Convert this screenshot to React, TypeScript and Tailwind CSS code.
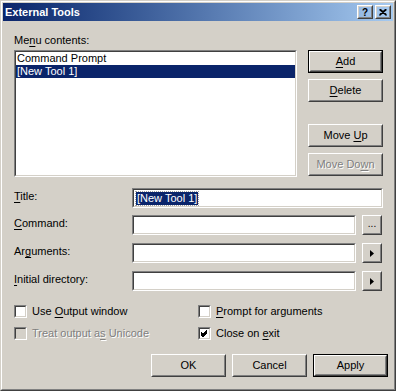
import React from "react";

const U = ({ children }: { children: React.ReactNode }) => (
  <span className="underline underline-offset-[2px] decoration-1">{children}</span>
);

function Raised({
  w,
  h,
  def,
  disabled,
  children,
}: {
  w: number;
  h: number;
  def?: boolean;
  disabled?: boolean;
  children: React.ReactNode;
}) {
  const inner = (
    <div className="w-full h-full border border-t-white border-l-white border-r-[#404040] border-b-[#404040]">
      <div
        className={
          "w-full h-full flex items-center justify-center border border-t-[#d4d0c8] border-l-[#d4d0c8] border-r-[#808080] border-b-[#808080] " +
          (disabled ? "text-[#808080] [text-shadow:1px_1px_0_#ffffff]" : "text-black")
        }
      >
        <span className="flex items-center whitespace-pre">{children}</span>
      </div>
    </div>
  );
  return (
    <div
      style={{ width: w, height: h }}
      className={def ? "border border-black box-border" : "box-border"}
    >
      {inner}
    </div>
  );
}

function Sunken({ w, h, bg = "bg-white", children }: { w: number; h: number; bg?: string; children?: React.ReactNode }) {
  return (
    <div
      style={{ width: w, height: h }}
      className="box-border border border-t-[#808080] border-l-[#808080] border-r-white border-b-white"
    >
      <div className={"w-full h-full border border-t-[#404040] border-l-[#404040] border-r-[#d4d0c8] border-b-[#d4d0c8] " + bg}>
        {children}
      </div>
    </div>
  );
}

function Check({ checked, disabled, children }: { checked?: boolean; disabled?: boolean; children: React.ReactNode }) {
  return (
    <div className="flex items-center h-[13px] gap-[5px]">
      <Sunken w={13} h={13} bg={disabled ? "bg-[#d4d0c8]" : "bg-white"}>
        {checked && (
          <svg width="9" height="9" viewBox="0 0 9 9" className="block">
            <path d="M1 3.5 L3 5.5 L7 1.5 M1 4.5 L3 6.5 L7 2.5 M1 5.5 L3 7.5 L7 3.5" stroke="#000" strokeWidth="1" fill="none" shapeRendering="crispEdges" />
          </svg>
        )}
      </Sunken>
      <span className={disabled ? "text-[#808080] [text-shadow:1px_1px_0_#ffffff]" : "text-black"}>{children}</span>
    </div>
  );
}

function Arrow() {
  return (
    <svg width="4" height="7" viewBox="0 0 4 7" className="block">
      <path d="M0 0 L4 3.5 L0 7 Z" fill="#000" />
    </svg>
  );
}

function FieldRow({ label, mt, button, children }: { label: React.ReactNode; mt: number; button?: React.ReactNode; children?: React.ReactNode }) {
  return (
    <div className="flex items-center h-[20px]" style={{ marginTop: mt }}>
      <div className="w-[118px] -mt-[3px]">{label}</div>
      {button ? (
        <>
          <Sunken w={224} h={20} />
          <div className="ml-[6px]">
            <Raised w={20} h={20}>{button}</Raised>
          </div>
        </>
      ) : (
        <Sunken w={251} h={20}>
          {children}
        </Sunken>
      )}
    </div>
  );
}

export default function App() {
  return (
    <div
      className="w-[396px] h-[391px] box-border border border-t-[#d4d0c8] border-l-[#d4d0c8] border-r-[#404040] border-b-[#404040] bg-[#d4d0c8] text-[11px] leading-[13px] text-black"
      style={{ fontFamily: '"Liberation Sans", Arial, sans-serif' }}
    >
      <div className="w-full h-full box-border border border-t-white border-l-white border-r-[#808080] border-b-[#808080] p-[1px]">
        {/* title bar */}
        <div className="h-[18px] flex items-center justify-between bg-linear-to-r from-[#0a246a] to-[#a6caf0] pl-[2px] pr-[2px]">
          <span className="text-white font-bold text-[11px]">External Tools</span>
          <div className="flex gap-[2px]">
            <Raised w={16} h={14}>
              <span className="font-bold text-[10px] leading-[10px] mt-[1px]">?</span>
            </Raised>
            <Raised w={16} h={14}>
              <svg width="8" height="7" viewBox="0 0 8 7" className="block">
                <path d="M0.5 0.5 L7.5 6.5 M1.5 0.5 L7.5 5.7 M7.5 0.5 L0.5 6.5 M6.5 0.5 L0.5 5.7" stroke="#000" strokeWidth="1.2" fill="none" />
              </svg>
            </Raised>
          </div>
        </div>

        {/* body */}
        <div className="pl-[11px]">
          <div className="flex pt-[13px]">
            <div className="w-[283px]">
              <div className="h-[13px]">
                Me<U>n</U>u contents:
              </div>
              <div className="mt-[3px]">
                <Sunken w={283} h={127}>
                  <div className="h-[13px] pl-[1px] flex items-center">Command Prompt</div>
                  <div className="h-[13px] pl-[1px] flex items-center bg-[#0a246a] text-white">[New Tool 1]</div>
                </Sunken>
              </div>
            </div>
            <div className="ml-[11px] pt-[16px] flex flex-col">
              <Raised w={75} h={23} def>
                <U>A</U>dd
              </Raised>
              <div className="mt-[6px]">
                <Raised w={75} h={23}>
                  <U>D</U>elete
                </Raised>
              </div>
              <div className="mt-[22px]">
                <Raised w={75} h={23}>
                  {"Move "}<U>U</U>p
                </Raised>
              </div>
              <div className="mt-[6px]">
                <Raised w={75} h={23} disabled>
                  Move Do<U>w</U>n
                </Raised>
              </div>
            </div>
          </div>

          <FieldRow mt={11} label={<><U>T</U>itle:</>}>
            <div className="h-full flex items-center pl-[2px]">
              <span className="bg-[#0a246a] text-white h-[13px] leading-[13px] px-[1px] outline-1 outline-dotted outline-[#a0a0a0]">[New Tool 1]</span>
            </div>
          </FieldRow>
          <FieldRow mt={7} label={<><U>C</U>ommand:</>} button={<span className="text-[10px] leading-[8px] -mt-[2px]">...</span>} />
          <FieldRow mt={8} label={<>Ar<U>g</U>uments:</>} button={<Arrow />} />
          <FieldRow mt={8} label={<><U>I</U>nitial directory:</>} button={<Arrow />} />

          <div className="grid grid-cols-[184px_1fr] gap-y-[9px] mt-[14px]">
            <Check>
              Use <U>O</U>utput window
            </Check>
            <Check>
              <U>P</U>rompt for arguments
            </Check>
            <Check disabled>
              Treat output a<U>s</U> Unicode
            </Check>
            <Check checked>
              Close on <U>e</U>xit
            </Check>
          </div>

          <div className="flex justify-end gap-[6px] mt-[14px] pr-[5px]">
            <Raised w={75} h={23}>OK</Raised>
            <Raised w={75} h={23}>Cancel</Raised>
            <Raised w={75} h={23} def>
              Apply
            </Raised>
          </div>
        </div>
      </div>
    </div>
  );
}
